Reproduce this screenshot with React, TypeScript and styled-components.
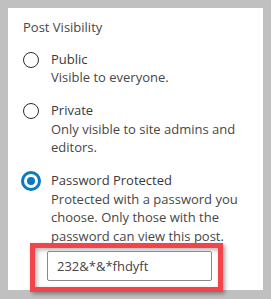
import React from "react";
import styled, { createGlobalStyle } from "styled-components";

const Global = createGlobalStyle`
  html, body { margin: 0; padding: 0; background: #c0c0c0; }
  body { font-family: "Open Sans", "Noto Sans", sans-serif; }
`;

const Page = styled.div`
  padding: 8px;
  width: 271px;
  height: 299px;
  box-sizing: border-box;
`;

const Panel = styled.div`
  width: 255px;
  height: 282px;
  box-sizing: border-box;
  background: #ffffff;
  padding: 10px 0 0 0;
  color: #444444;
  font-size: 13px;
  line-height: 18.5px;
`;

const Title = styled.div`
  padding-left: 15px;
  margin-bottom: 13px;
  color: #474747;
`;

const Options = styled.div`
  display: flex;
  flex-direction: column;
  gap: 14.5px;
  padding-left: 12px;
  padding-right: 20px;
`;

const Option = styled.label`
  display: grid;
  grid-template-columns: 21px 1fr;
  column-gap: 10px;
  align-items: start;
`;

const RadioWrap = styled.span`
  display: flex;
  justify-content: center;
  align-items: center;
  height: 20px;
`;

const Radio = styled.span<{ $checked?: boolean }>`
  box-sizing: border-box;
  display: flex;
  align-items: center;
  justify-content: center;
  border-radius: 50%;
  width: ${(p) => (p.$checked ? "20px" : "16px")};
  height: ${(p) => (p.$checked ? "20px" : "16px")};
  border: ${(p) => (p.$checked ? "3px solid #0b7ac3" : "1.3px solid #2b2b2b")};
  background: #fff;
`;

const Dot = styled.span`
  width: 8px;
  height: 8px;
  border-radius: 50%;
  background: #0b7ac3;
`;

const Text = styled.span`
  display: flex;
  flex-direction: column;
`;

const Label = styled.span`
  color: #3a3a3a;
`;

const Desc = styled.span`
  color: #474747;
`;

const Highlight = styled.div`
  position: relative;
  z-index: 1;
  margin: -2px 0 0 22px;
  width: 193px;
  height: 49px;
  box-sizing: border-box;
  border: 5px solid #f1444b;
  padding: 3px 6px 6px 12px;
  box-shadow: 2px 2px 4px rgba(0, 0, 0, 0.35), inset 2px 2px 4px rgba(0, 0, 0, 0.3);
  background: #ffffff;
`;

const Input = styled.input`
  box-sizing: border-box;
  width: 165px;
  height: 30px;
  border: 1px solid #8a8a8a;
  border-radius: 2px;
  padding: 0 9px;
  font-family: "Open Sans", "Noto Sans", sans-serif;
  font-size: 13px;
  color: #444;
  background: #fff;
  outline: none;
`;

const options = [
  { label: "Public", desc: "Visible to everyone.", checked: false },
  { label: "Private", desc: "Only visible to site admins and editors.", checked: false },
  {
    label: "Password Protected",
    desc: "Protected with a password you choose. Only those with the password can view this post.",
    checked: true,
  },
];

export default function App() {
  return (
    <Page>
      <Global />
      <Panel>
        <Title>Post Visibility</Title>
        <Options>
          {options.map((o) => (
            <Option key={o.label}>
              <RadioWrap>
                <Radio $checked={o.checked}>{o.checked && <Dot />}</Radio>
              </RadioWrap>
              <Text>
                <Label>{o.label}</Label>
                <Desc>{o.desc}</Desc>
              </Text>
            </Option>
          ))}
        </Options>
        <Highlight>
          <Input defaultValue="232&*&*fhdyft" />
        </Highlight>
      </Panel>
    </Page>
  );
}
